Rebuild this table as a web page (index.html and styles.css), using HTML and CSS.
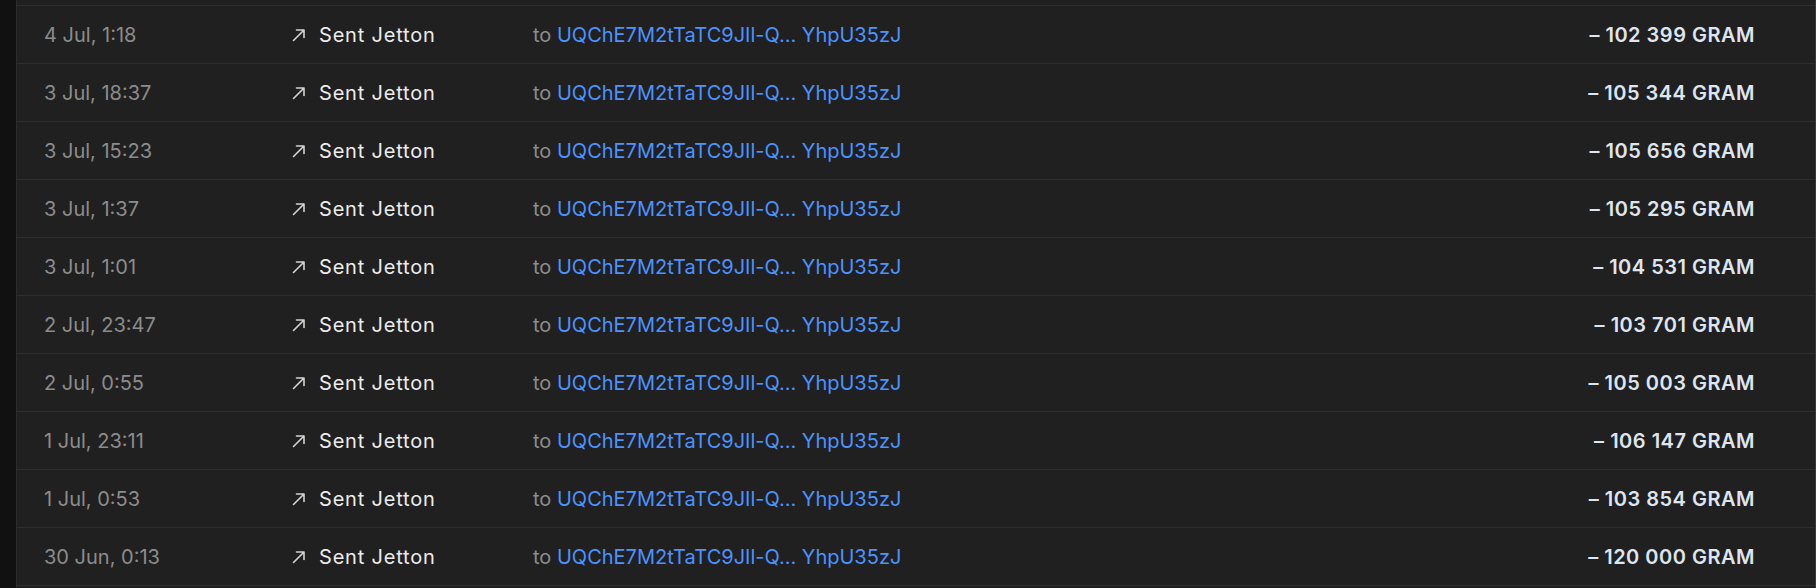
FILE: index.html
```html
<!DOCTYPE html>
<html>
<head>
<meta charset="utf-8">
<link rel="stylesheet" href="styles.css">
</head>
<body>
<div class="page">
  <div class="side"></div>
  <div class="panel">
    <div class="list">
      <div class="row"><span class="date">4 Jul, 1:18</span><span class="type"><svg class="arrow" viewBox="0 0 14 14"><path d="M1.5 12.5 L12 2 M4.5 2 H12 V9.5"/></svg>Sent Jetton</span><span class="addr"><span class="to">to</span> <span class="link">UQChE7M2tTaTC9JIl-Q… YhpU35zJ</span></span><span class="amount">– 102 399 GRAM</span></div>
      <div class="row"><span class="date">3 Jul, 18:37</span><span class="type"><svg class="arrow" viewBox="0 0 14 14"><path d="M1.5 12.5 L12 2 M4.5 2 H12 V9.5"/></svg>Sent Jetton</span><span class="addr"><span class="to">to</span> <span class="link">UQChE7M2tTaTC9JIl-Q… YhpU35zJ</span></span><span class="amount">– 105 344 GRAM</span></div>
      <div class="row"><span class="date">3 Jul, 15:23</span><span class="type"><svg class="arrow" viewBox="0 0 14 14"><path d="M1.5 12.5 L12 2 M4.5 2 H12 V9.5"/></svg>Sent Jetton</span><span class="addr"><span class="to">to</span> <span class="link">UQChE7M2tTaTC9JIl-Q… YhpU35zJ</span></span><span class="amount">– 105 656 GRAM</span></div>
      <div class="row"><span class="date">3 Jul, 1:37</span><span class="type"><svg class="arrow" viewBox="0 0 14 14"><path d="M1.5 12.5 L12 2 M4.5 2 H12 V9.5"/></svg>Sent Jetton</span><span class="addr"><span class="to">to</span> <span class="link">UQChE7M2tTaTC9JIl-Q… YhpU35zJ</span></span><span class="amount">– 105 295 GRAM</span></div>
      <div class="row"><span class="date">3 Jul, 1:01</span><span class="type"><svg class="arrow" viewBox="0 0 14 14"><path d="M1.5 12.5 L12 2 M4.5 2 H12 V9.5"/></svg>Sent Jetton</span><span class="addr"><span class="to">to</span> <span class="link">UQChE7M2tTaTC9JIl-Q… YhpU35zJ</span></span><span class="amount">– 104 531 GRAM</span></div>
      <div class="row"><span class="date">2 Jul, 23:47</span><span class="type"><svg class="arrow" viewBox="0 0 14 14"><path d="M1.5 12.5 L12 2 M4.5 2 H12 V9.5"/></svg>Sent Jetton</span><span class="addr"><span class="to">to</span> <span class="link">UQChE7M2tTaTC9JIl-Q… YhpU35zJ</span></span><span class="amount">– 103 701 GRAM</span></div>
      <div class="row"><span class="date">2 Jul, 0:55</span><span class="type"><svg class="arrow" viewBox="0 0 14 14"><path d="M1.5 12.5 L12 2 M4.5 2 H12 V9.5"/></svg>Sent Jetton</span><span class="addr"><span class="to">to</span> <span class="link">UQChE7M2tTaTC9JIl-Q… YhpU35zJ</span></span><span class="amount">– 105 003 GRAM</span></div>
      <div class="row"><span class="date">1 Jul, 23:11</span><span class="type"><svg class="arrow" viewBox="0 0 14 14"><path d="M1.5 12.5 L12 2 M4.5 2 H12 V9.5"/></svg>Sent Jetton</span><span class="addr"><span class="to">to</span> <span class="link">UQChE7M2tTaTC9JIl-Q… YhpU35zJ</span></span><span class="amount">– 106 147 GRAM</span></div>
      <div class="row"><span class="date">1 Jul, 0:53</span><span class="type"><svg class="arrow" viewBox="0 0 14 14"><path d="M1.5 12.5 L12 2 M4.5 2 H12 V9.5"/></svg>Sent Jetton</span><span class="addr"><span class="to">to</span> <span class="link">UQChE7M2tTaTC9JIl-Q… YhpU35zJ</span></span><span class="amount">– 103 854 GRAM</span></div>
      <div class="row"><span class="date">30 Jun, 0:13</span><span class="type"><svg class="arrow" viewBox="0 0 14 14"><path d="M1.5 12.5 L12 2 M4.5 2 H12 V9.5"/></svg>Sent Jetton</span><span class="addr"><span class="to">to</span> <span class="link">UQChE7M2tTaTC9JIl-Q… YhpU35zJ</span></span><span class="amount">– 120 000 GRAM</span></div>
    </div>
  </div>
</div>
</body>
</html>
```
FILE: styles.css
```css
html, body {
  margin: 0;
  padding: 0;
  background: #111111;
  height: 100%;
}
body {
  font-family: Inter, "Noto Sans", sans-serif;
  font-size: 20px;
  -webkit-font-smoothing: antialiased;
}
.page {
  display: flex;
  height: 588px;
  overflow: hidden;
}
.side {
  width: 16px;
  flex: none;
  background: #111111;
}
.panel {
  flex: 1;
  background: #202020;
  border-left: 1px solid #2c2c2c;
  border-right: 1px solid #3a3a3a;
  padding-top: 5px;
}
.list {
  border-top: 1px solid #2e2e2e;
}
.row {
  display: grid;
  grid-template-columns: 248px 241px 1fr auto;
  align-items: center;
  height: 57px;
  border-bottom: 1px solid #2e2e2e;
  padding: 0 60px 0 27px;
}
.date {
  color: #8c8c8c;
}
.type {
  display: flex;
  align-items: center;
  color: #ececec;
  letter-spacing: 0.8px;
}
.arrow {
  width: 14px;
  height: 14px;
  margin-right: 13px;
  fill: none;
  stroke: #d4d4d4;
  stroke-width: 1.6;
  stroke-linecap: round;
  stroke-linejoin: round;
}
.to {
  color: #8c8c8c;
}
.link {
  color: #4c93ff;
}
.amount {
  color: #dfe5ee;
  font-weight: 600;
  letter-spacing: 0.5px;
  text-align: right;
}
```
